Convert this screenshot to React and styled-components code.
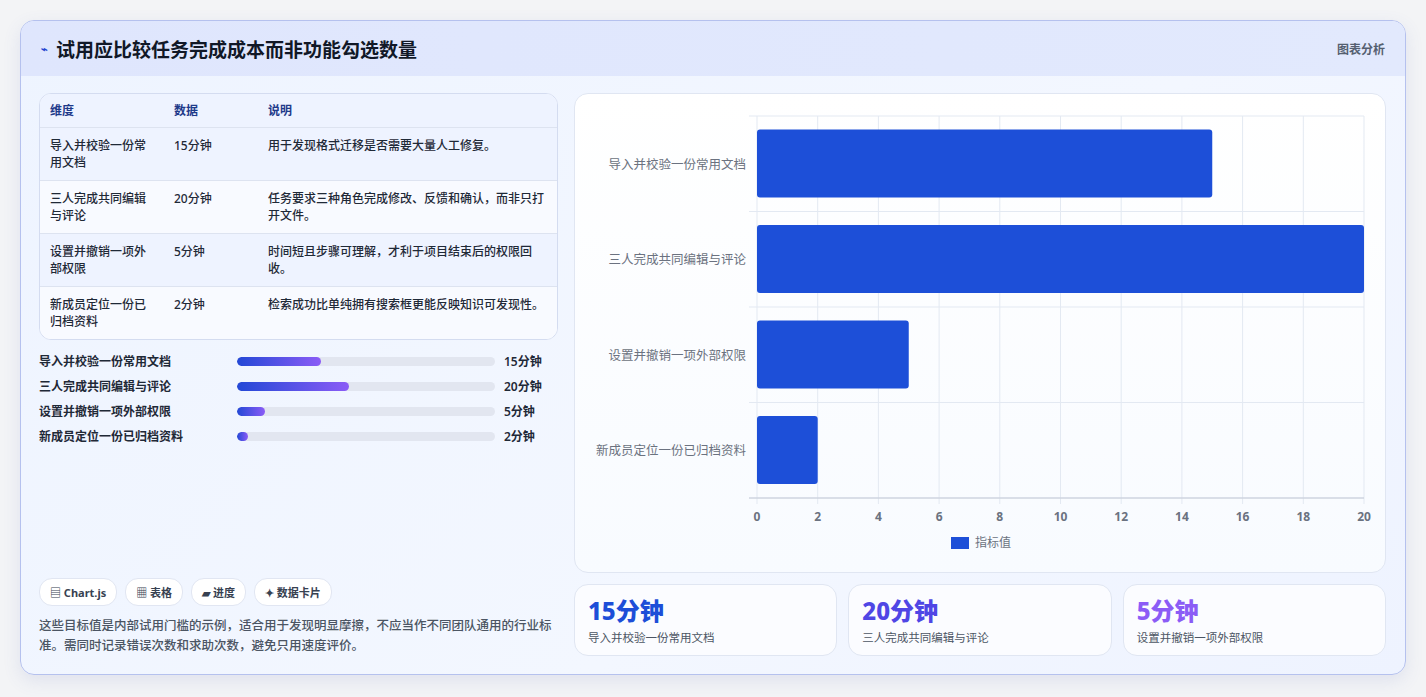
import React from "react";
import styled, { createGlobalStyle } from "styled-components";

const G = createGlobalStyle`
  body{margin:0;background:#f3f4f6;font-family:"Noto Sans","Noto Sans CJK SC",sans-serif;}
`;
const Page = styled.div`padding:20px 20px 21px 20px;`;
const Card = styled.div`
  border:1px solid #b5c1ee;border-radius:14px;overflow:hidden;
  background:linear-gradient(135deg,#eef4ff,#f3f7ff 60%,#eef3ff);
  box-shadow:0 6px 18px rgba(80,100,180,.12);
`;
const Header = styled.div`
  height:55px;display:flex;align-items:center;justify-content:space-between;
  padding:0 20px 0 20px;background:linear-gradient(90deg,#dfe6fd,#e2e9fd);
`;
const Title = styled.h1`margin:0;font-size:19px;font-weight:700;color:#111827;display:flex;align-items:center;gap:8px;
  span{font-size:11px;color:#2545d0;}`;
const Tag = styled.div`font-size:12px;color:#555f70;font-weight:600;`;
const Body = styled.div`display:grid;grid-template-columns:519px 812px;gap:16px;padding:17px 18px 18px 18px;`;
const Col = styled.div`display:flex;flex-direction:column;`;
const Table = styled.div`border:1px solid #d4dcf0;border-radius:12px;overflow:hidden;background:#fff;`;
const Row = styled.div`
  display:grid;grid-template-columns:124px 94px 1fr;padding:${p=>p.$head?"8px 10px":"9px 10px"};
  min-height:${p=>p.$head?"16px":"34px"};font-size:12px;line-height:17px;font-weight:${p=>p.$head?600:500};
  color:${p=>p.$head?"#1e3a8a":"#1f2937"};background:${p=>p.$head||p.$alt?"#eef3ff":"#f8faff"};
  border-top:${p=>p.$head?"none":"1px solid #dde3f0"};
`;
const Bars = styled.div`display:flex;flex-direction:column;gap:9px;margin-top:12px;`;
const BarRow = styled.div`display:grid;grid-template-columns:189px 258px 1fr;align-items:center;column-gap:9px;font-size:12px;font-weight:600;color:#1f2937;height:16px;`;
const Track = styled.div`height:9px;border-radius:5px;background:#e2e6f0;overflow:hidden;`;
const Fill = styled.div`height:100%;border-radius:5px;background:linear-gradient(90deg,#2348d6,#8b5cf6);`;
const Chips = styled.div`display:flex;gap:8px;margin-top:auto;`;
const Chip = styled.div`height:26px;padding:0 10px;border-radius:13px;background:#fff;border:1px solid #e1e6f2;font-size:11px;font-weight:700;color:#374151;display:flex;align-items:center;gap:4px;`;
const Note = styled.p`margin:10px 0 0;font-size:12.5px;line-height:20px;color:#4b5563;font-weight:500;`;
const ChartCard = styled.div`background:linear-gradient(180deg,#fff,#f8fbff);border:1px solid #e0e6f2;border-radius:14px;height:478px;`;
const Stats = styled.div`display:grid;grid-template-columns:repeat(3,1fr);gap:11px;margin-top:11px;`;
const Stat = styled.div`background:#fbfcff;border:1px solid #e0e6f2;border-radius:14px;height:72px;padding:10px 13px;box-sizing:border-box;`;
const Big = styled.div`font-size:24px;font-weight:800;line-height:32px;color:${p=>p.$c};`;
const Small = styled.div`font-size:11.5px;color:#4b5563;margin-top:2px;`;

const data=[["导入并校验一份常用文档","15分钟",15,"用于发现格式迁移是否需要大量人工修复。","导入并校验一份常\n用文档"],
["三人完成共同编辑与评论","20分钟",20,"任务要求三种角色完成修改、反馈和确认，而非只打开文件。","三人完成共同编辑\n与评论"],
["设置并撤销一项外部权限","5分钟",5,"时间短且步骤可理解，才利于项目结束后的权限回收。","设置并撤销一项外\n部权限"],
["新成员定位一份已归档资料","2分钟",2,"检索成功比单纯拥有搜索框更能反映知识可发现性。","新成员定位一份已\n归档资料"]];

function Chart(){
  const x0=182,x1=789,y0=22,y1=404,bw=(x1-x0)/20,band=(y1-y0)/4;
  return <svg width="812" height="478" style={{display:"block"}}>
    {Array.from({length:11}).map((_,i)=><line key={i} x1={x0+i*2*bw} x2={x0+i*2*bw} y1={y0} y2={y1+6} stroke="#e3e9f2"/>)}
    {[0,1,2,3,4].map(i=><line key={i} x1={x0-8} x2={x1} y1={y0+i*band} y2={y0+i*band} stroke="#e3e9f2"/>)}
    <line x1={x0-8} x2={x1} y1={y1} y2={y1} stroke="#c4cad6"/>
    {data.map((d,i)=><g key={i}>
      <rect x={x0} y={y0+i*band+13.5} width={d[2]*bw} height={68} rx="3" fill="#1d4fd8"/>
      <text x={x0-11} y={y0+i*band+band/2+5} textAnchor="end" fontSize="12.5" fill="#6b7280" fontFamily="Noto Sans CJK SC">{d[0]}</text>
    </g>)}
    {Array.from({length:11}).map((_,i)=><text key={i} x={x0+i*2*bw} y={427} textAnchor="middle" fontSize="12" fontWeight="700" fill="#6b7280" fontFamily="Noto Sans">{i*2}</text>)}
    <rect x="376" y="443" width="18" height="12" fill="#1d4fd8"/>
    <text x="400" y="453" fontSize="12" fill="#6b7280" fontFamily="Noto Sans CJK SC">指标值</text>
  </svg>;
}

export default function App(){
  return <Page><G/><Card>
    <Header><Title><span>⌁</span>试用应比较任务完成成本而非功能勾选数量</Title><Tag>图表分析</Tag></Header>
    <Body>
      <Col>
        <Table>
          <Row $head><div>维度</div><div>数据</div><div>说明</div></Row>
          {data.map((d,i)=><Row key={i} $alt={i%2==0}><div style={{whiteSpace:"pre-line"}}>{d[4]}</div><div>{d[1]}</div><div>{d[3]}</div></Row>)}
        </Table>
        <Bars>{data.map((d,i)=><BarRow key={i}><div>{d[0]}</div><Track><Fill style={{width:`${d[2]/46*100}%`}}/></Track><div>{d[1]}</div></BarRow>)}</Bars>
        <Chips><Chip>▤ Chart.js</Chip><Chip>▦ 表格</Chip><Chip>▰ 进度</Chip><Chip>✦ 数据卡片</Chip></Chips>
        <Note>这些目标值是内部试用门槛的示例，适合用于发现明显摩擦，不应当作不同团队通用的行业标准。需同时记录错误次数和求助次数，避免只用速度评价。</Note>
      </Col>
      <Col>
        <ChartCard><Chart/></ChartCard>
        <Stats>
          <Stat><Big $c="#1d4ed8">15分钟</Big><Small>导入并校验一份常用文档</Small></Stat>
          <Stat><Big $c="#4f46e5">20分钟</Big><Small>三人完成共同编辑与评论</Small></Stat>
          <Stat><Big $c="#8b5cf6">5分钟</Big><Small>设置并撤销一项外部权限</Small></Stat>
        </Stats>
      </Col>
    </Body>
  </Card></Page>;
}
